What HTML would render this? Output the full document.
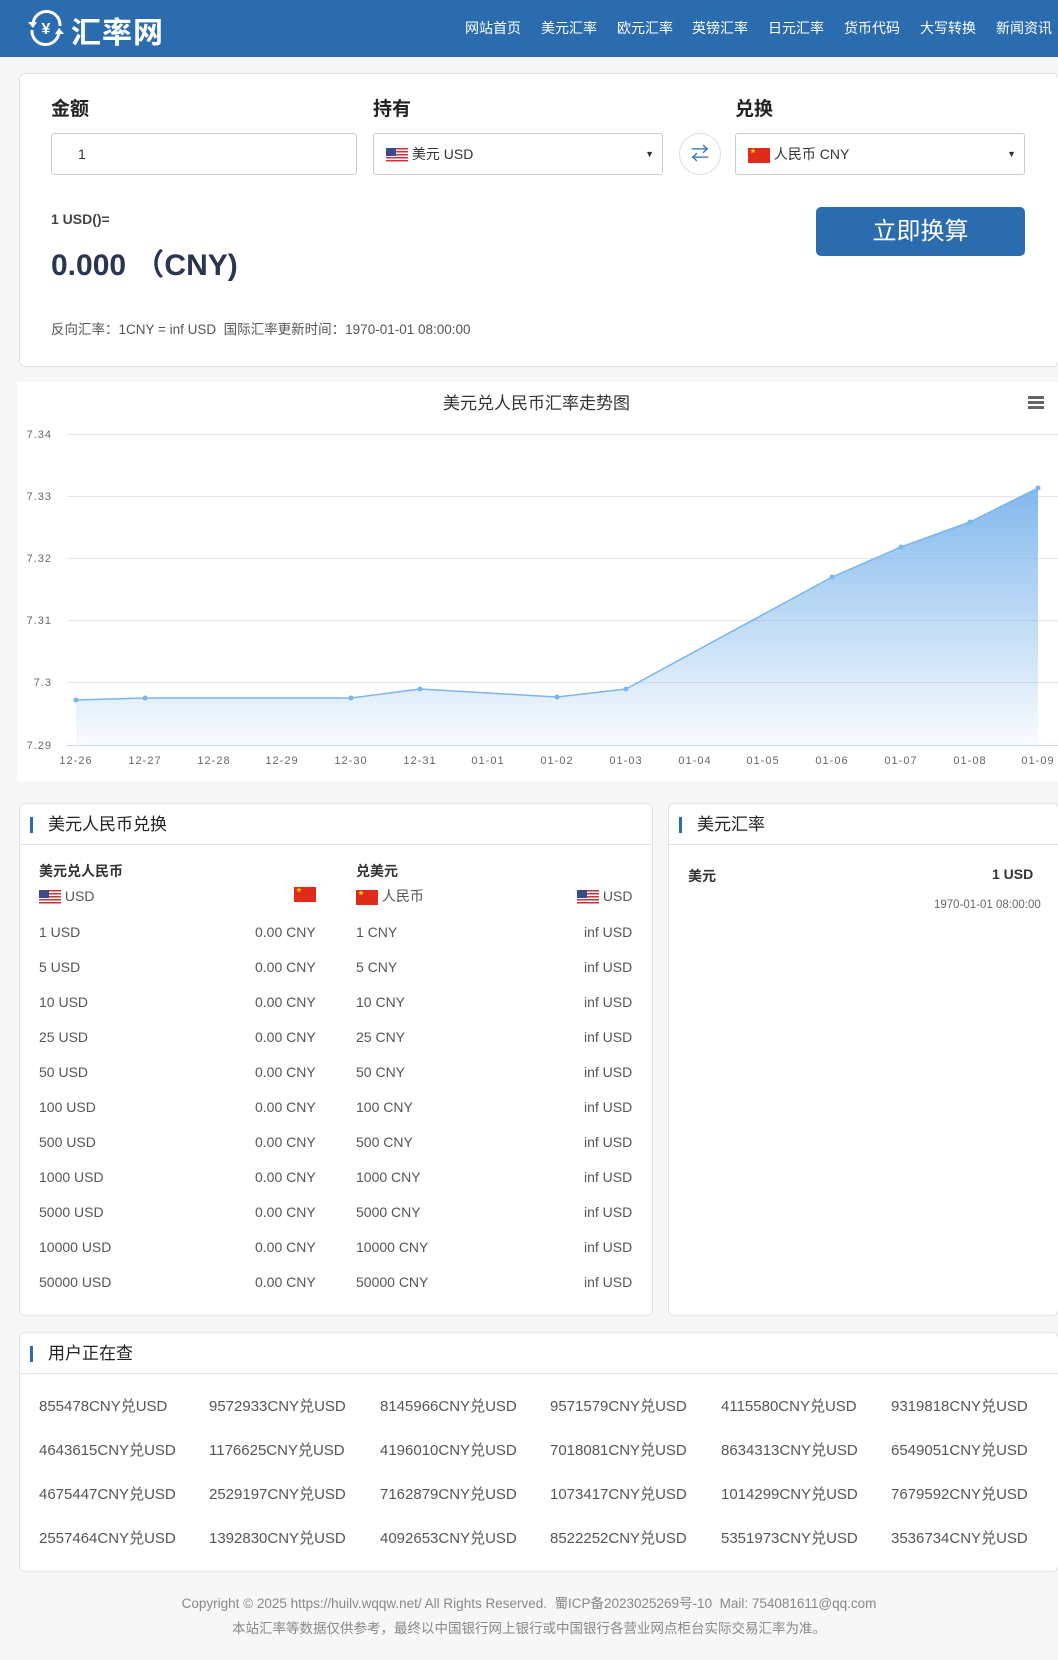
<!DOCTYPE html>
<html><head><meta charset="utf-8">
<style>
*{margin:0;padding:0;box-sizing:border-box}
body{width:1058px;height:1660px;background:#f7f7f7;font-family:"Liberation Sans","Noto Sans CJK SC",sans-serif;color:#333;position:relative;overflow:hidden}
.a{position:absolute;white-space:nowrap}
.hdr{position:absolute;left:0;top:0;width:1058px;height:57px;background:#2b6cae}
.nav{color:#fff;font-size:14px;top:18px}
.card{position:absolute;background:#fff;border:1px solid #e3e3e3;border-radius:6px}
.lbl{font-size:19px;font-weight:bold;color:#222}
.box{position:absolute;top:133px;height:42px;border:1px solid #ccc;border-radius:3px;background:#fff;font-size:14px;line-height:40px}
.us{display:inline-block;width:22px;height:15px;vertical-align:middle;background:repeating-linear-gradient(#c33 0 1.5px,#fff 1.5px 3px);position:relative}
.us:before{content:"";position:absolute;left:0;top:0;width:10px;height:8px;background:#3b4a8a}
.cn{display:inline-block;width:22px;height:15px;vertical-align:middle;background:#e02a1a;position:relative;overflow:hidden}
.cn:before{content:"★";position:absolute;left:2px;top:1px;font-size:6px;line-height:6px;color:#ffde00}
.ph{position:absolute;left:0;top:0;right:0;height:41px;border-bottom:1px solid #e3e3e3;font-size:17px;line-height:41px;padding-left:28px;color:#222}
.ph:before{content:"";position:absolute;left:10px;top:13px;width:3px;height:16px;background:#2b6cae}
.r{font-size:14px;color:#555}
.q{font-size:15px;color:#555}
</style></head><body>
<div class="hdr">
<svg class="a" style="left:27px;top:9px" width="38" height="38" viewBox="0 0 38 38"><path d="M6 15A13.5 13.5 0 0 1 33 17" stroke="#fff" stroke-width="3" fill="none"/><path d="M32 23A13.5 13.5 0 0 1 5 21" stroke="#fff" stroke-width="3" fill="none"/><path d="M1 13l9 0-4 6z M37 25l-9 0 4-6z" fill="#fff"/><text x="19" y="25" text-anchor="middle" font-size="16" font-weight="bold" fill="#fff" font-family="Liberation Sans">¥</text></svg>
<div class="a" style="left:71px;top:8px;font-size:30px;font-weight:bold;color:#fff;letter-spacing:1px">汇率网</div>
<div class="a nav" style="left:465px">网站首页</div>
<div class="a nav" style="left:541px">美元汇率</div>
<div class="a nav" style="left:617px">欧元汇率</div>
<div class="a nav" style="left:692px">英镑汇率</div>
<div class="a nav" style="left:768px">日元汇率</div>
<div class="a nav" style="left:844px">货币代码</div>
<div class="a nav" style="left:920px">大写转换</div>
<div class="a nav" style="left:996px">新闻资讯</div>
</div>

<div class="card" style="left:19px;top:73px;width:1040px;height:294px"></div>
<div class="a lbl" style="left:51px;top:94px">金额</div>
<div class="a lbl" style="left:373px;top:94px">持有</div>
<div class="a lbl" style="left:735px;top:94px">兑换</div>
<div class="box" style="left:51px;width:306px;padding-left:26px">1</div>
<div class="box" style="left:373px;width:290px;padding-left:12px"><span class="us"></span> 美元 USD<span class="a" style="right:8px;font-size:9px">▼</span></div>
<div class="a" style="left:679px;top:133px;width:42px;height:42px;border:1px solid #ddd;border-radius:50%;text-align:center;line-height:40px;color:#2b6cae;font-size:18px">⇄</div>
<div class="box" style="left:735px;width:290px;padding-left:12px"><span class="cn"></span> 人民币 CNY<span class="a" style="right:8px;font-size:9px">▼</span></div>
<div class="a" style="left:51px;top:211px;font-size:14px;font-weight:bold;color:#444">1 USD()=</div>
<div class="a" style="left:51px;top:240px;font-size:30px;font-weight:bold;color:#2a3550">0.000 （CNY)</div>
<div class="a" style="left:816px;top:207px;width:209px;height:49px;background:#2b6cae;border-radius:5px;color:#fff;font-size:24px;text-align:center;line-height:49px">立即换算</div>
<div class="a" style="left:51px;top:318px;font-size:13.5px;color:#555">反向汇率：1CNY = inf USD &nbsp;国际汇率更新时间：1970-01-01 08:00:00</div>

<div class="a" style="left:17px;top:382px;width:1041px;height:399px;background:#fff"></div>
<div class="a" style="left:0;width:1058px;top:389px;text-align:center;font-size:17px;color:#333;padding-left:15px">美元兑人民币汇率走势图</div>
<div class="a" style="left:1028px;top:396px;width:16px;height:3px;background:#666;box-shadow:0 5px #666,0 10px #666"></div>
<svg class="a" style="left:0;top:0" width="1058" height="790">
<defs><linearGradient id="g" x1="0" y1="0" x2="0" y2="1"><stop offset="0" stop-color="#7cb5ec" stop-opacity=".95"/><stop offset="1" stop-color="#7cb5ec" stop-opacity=".05"/></linearGradient></defs>
<g stroke="#e6e6e6" stroke-width="1"><line x1="67" y1="434.5" x2="1058" y2="434.5"/><line x1="67" y1="496.5" x2="1058" y2="496.5"/><line x1="67" y1="558.5" x2="1058" y2="558.5"/><line x1="67" y1="620.5" x2="1058" y2="620.5"/><line x1="67" y1="682.5" x2="1058" y2="682.5"/></g>
<line x1="67" y1="745.5" x2="1058" y2="745.5" stroke="#ccd6eb"/>
<path d="M76 700L145 698L351 698L420 689L557 697L626 689L832 577L901 547L970 522L1038 488L1038 745L76 745Z" fill="url(#g)"/>
<path d="M76 700L145 698L351 698L420 689L557 697L626 689L832 577L901 547L970 522L1038 488" stroke="#7cb5ec" stroke-width="1.5" fill="none"/>
<g fill="#7cb5ec"><circle cx="76" cy="700" r="2.5"/><circle cx="145" cy="698" r="2.5"/><circle cx="351" cy="698" r="2.5"/><circle cx="420" cy="689" r="2.5"/><circle cx="557" cy="697" r="2.5"/><circle cx="626" cy="689" r="2.5"/><circle cx="832" cy="577" r="2.5"/><circle cx="901" cy="547" r="2.5"/><circle cx="970" cy="522" r="2.5"/><circle cx="1038" cy="488" r="2.5"/></g>
<g font-family="Liberation Sans" font-size="11" fill="#666" letter-spacing="1">
<text x="52" y="438" text-anchor="end">7.34</text><text x="52" y="500" text-anchor="end">7.33</text><text x="52" y="562" text-anchor="end">7.32</text><text x="52" y="624" text-anchor="end">7.31</text><text x="52" y="686" text-anchor="end">7.3</text><text x="52" y="749" text-anchor="end">7.29</text>
<g text-anchor="middle"><text x="76" y="764">12-26</text><text x="145" y="764">12-27</text><text x="214" y="764">12-28</text><text x="282" y="764">12-29</text><text x="351" y="764">12-30</text><text x="420" y="764">12-31</text><text x="488" y="764">01-01</text><text x="557" y="764">01-02</text><text x="626" y="764">01-03</text><text x="695" y="764">01-04</text><text x="763" y="764">01-05</text><text x="832" y="764">01-06</text><text x="901" y="764">01-07</text><text x="970" y="764">01-08</text><text x="1038" y="764">01-09</text></g></g>
</svg>

<div class="card" style="left:19px;top:803px;width:634px;height:513px"><div class="ph">美元人民币兑换</div></div>
<div class="card" style="left:668px;top:803px;width:391px;height:513px"><div class="ph">美元汇率</div></div>
<div class="a" style="left:39px;top:861px;font-size:14px;font-weight:bold;color:#333">美元兑人民币</div>
<div class="a" style="left:356px;top:861px;font-size:14px;font-weight:bold;color:#333">兑美元</div>
<div class="a r" style="left:39px;top:888px"><span class="us"></span> USD</div>
<div class="a" style="left:294px;top:886px"><span class="cn"></span></div>
<div class="a r" style="left:356px;top:886px"><span class="cn"></span> 人民币</div>
<div class="a r" style="left:577px;top:888px"><span class="us"></span> USD</div>
<div class="a" style="left:688px;top:866px;font-size:14px;font-weight:bold">美元</div>
<div class="a" style="left:992px;top:866px;font-size:14px;font-weight:bold">1 USD</div>
<div class="a" style="left:934px;top:899px;font-size:11.5px;color:#666">1970-01-01 08:00:00</div>

<div class="card" style="left:19px;top:1332px;width:1040px;height:240px"><div class="ph">用户正在查</div></div>

<div class="a" style="left:0;width:1058px;text-align:center;top:1592px;font-size:13.5px;color:#888">Copyright © 2025 https://huilv.wqqw.net/ All Rights Reserved. &nbsp;蜀ICP备2023025269号-10 &nbsp;Mail: 754081611@qq.com</div>
<div class="a" style="left:0;width:1058px;text-align:center;top:1617px;font-size:13.5px;color:#888">本站汇率等数据仅供参考，最终以中国银行网上银行或中国银行各营业网点柜台实际交易汇率为准。</div>

<div class="a r" style="left:39px;top:924px">1 USD</div><div class="a r" style="left:255px;top:924px">0.00 CNY</div><div class="a r" style="left:356px;top:924px">1 CNY</div><div class="a r" style="left:584px;top:924px">inf USD</div>
<div class="a r" style="left:39px;top:959px">5 USD</div><div class="a r" style="left:255px;top:959px">0.00 CNY</div><div class="a r" style="left:356px;top:959px">5 CNY</div><div class="a r" style="left:584px;top:959px">inf USD</div>
<div class="a r" style="left:39px;top:994px">10 USD</div><div class="a r" style="left:255px;top:994px">0.00 CNY</div><div class="a r" style="left:356px;top:994px">10 CNY</div><div class="a r" style="left:584px;top:994px">inf USD</div>
<div class="a r" style="left:39px;top:1029px">25 USD</div><div class="a r" style="left:255px;top:1029px">0.00 CNY</div><div class="a r" style="left:356px;top:1029px">25 CNY</div><div class="a r" style="left:584px;top:1029px">inf USD</div>
<div class="a r" style="left:39px;top:1064px">50 USD</div><div class="a r" style="left:255px;top:1064px">0.00 CNY</div><div class="a r" style="left:356px;top:1064px">50 CNY</div><div class="a r" style="left:584px;top:1064px">inf USD</div>
<div class="a r" style="left:39px;top:1099px">100 USD</div><div class="a r" style="left:255px;top:1099px">0.00 CNY</div><div class="a r" style="left:356px;top:1099px">100 CNY</div><div class="a r" style="left:584px;top:1099px">inf USD</div>
<div class="a r" style="left:39px;top:1134px">500 USD</div><div class="a r" style="left:255px;top:1134px">0.00 CNY</div><div class="a r" style="left:356px;top:1134px">500 CNY</div><div class="a r" style="left:584px;top:1134px">inf USD</div>
<div class="a r" style="left:39px;top:1169px">1000 USD</div><div class="a r" style="left:255px;top:1169px">0.00 CNY</div><div class="a r" style="left:356px;top:1169px">1000 CNY</div><div class="a r" style="left:584px;top:1169px">inf USD</div>
<div class="a r" style="left:39px;top:1204px">5000 USD</div><div class="a r" style="left:255px;top:1204px">0.00 CNY</div><div class="a r" style="left:356px;top:1204px">5000 CNY</div><div class="a r" style="left:584px;top:1204px">inf USD</div>
<div class="a r" style="left:39px;top:1239px">10000 USD</div><div class="a r" style="left:255px;top:1239px">0.00 CNY</div><div class="a r" style="left:356px;top:1239px">10000 CNY</div><div class="a r" style="left:584px;top:1239px">inf USD</div>
<div class="a r" style="left:39px;top:1274px">50000 USD</div><div class="a r" style="left:255px;top:1274px">0.00 CNY</div><div class="a r" style="left:356px;top:1274px">50000 CNY</div><div class="a r" style="left:584px;top:1274px">inf USD</div>

<div class="a q" style="left:39px;top:1395px">855478CNY兑USD</div><div class="a q" style="left:209px;top:1395px">9572933CNY兑USD</div><div class="a q" style="left:380px;top:1395px">8145966CNY兑USD</div><div class="a q" style="left:550px;top:1395px">9571579CNY兑USD</div><div class="a q" style="left:721px;top:1395px">4115580CNY兑USD</div><div class="a q" style="left:891px;top:1395px">9319818CNY兑USD</div>
<div class="a q" style="left:39px;top:1439px">4643615CNY兑USD</div><div class="a q" style="left:209px;top:1439px">1176625CNY兑USD</div><div class="a q" style="left:380px;top:1439px">4196010CNY兑USD</div><div class="a q" style="left:550px;top:1439px">7018081CNY兑USD</div><div class="a q" style="left:721px;top:1439px">8634313CNY兑USD</div><div class="a q" style="left:891px;top:1439px">6549051CNY兑USD</div>
<div class="a q" style="left:39px;top:1483px">4675447CNY兑USD</div><div class="a q" style="left:209px;top:1483px">2529197CNY兑USD</div><div class="a q" style="left:380px;top:1483px">7162879CNY兑USD</div><div class="a q" style="left:550px;top:1483px">1073417CNY兑USD</div><div class="a q" style="left:721px;top:1483px">1014299CNY兑USD</div><div class="a q" style="left:891px;top:1483px">7679592CNY兑USD</div>
<div class="a q" style="left:39px;top:1527px">2557464CNY兑USD</div><div class="a q" style="left:209px;top:1527px">1392830CNY兑USD</div><div class="a q" style="left:380px;top:1527px">4092653CNY兑USD</div><div class="a q" style="left:550px;top:1527px">8522252CNY兑USD</div><div class="a q" style="left:721px;top:1527px">5351973CNY兑USD</div><div class="a q" style="left:891px;top:1527px">3536734CNY兑USD</div>
</body></html>
